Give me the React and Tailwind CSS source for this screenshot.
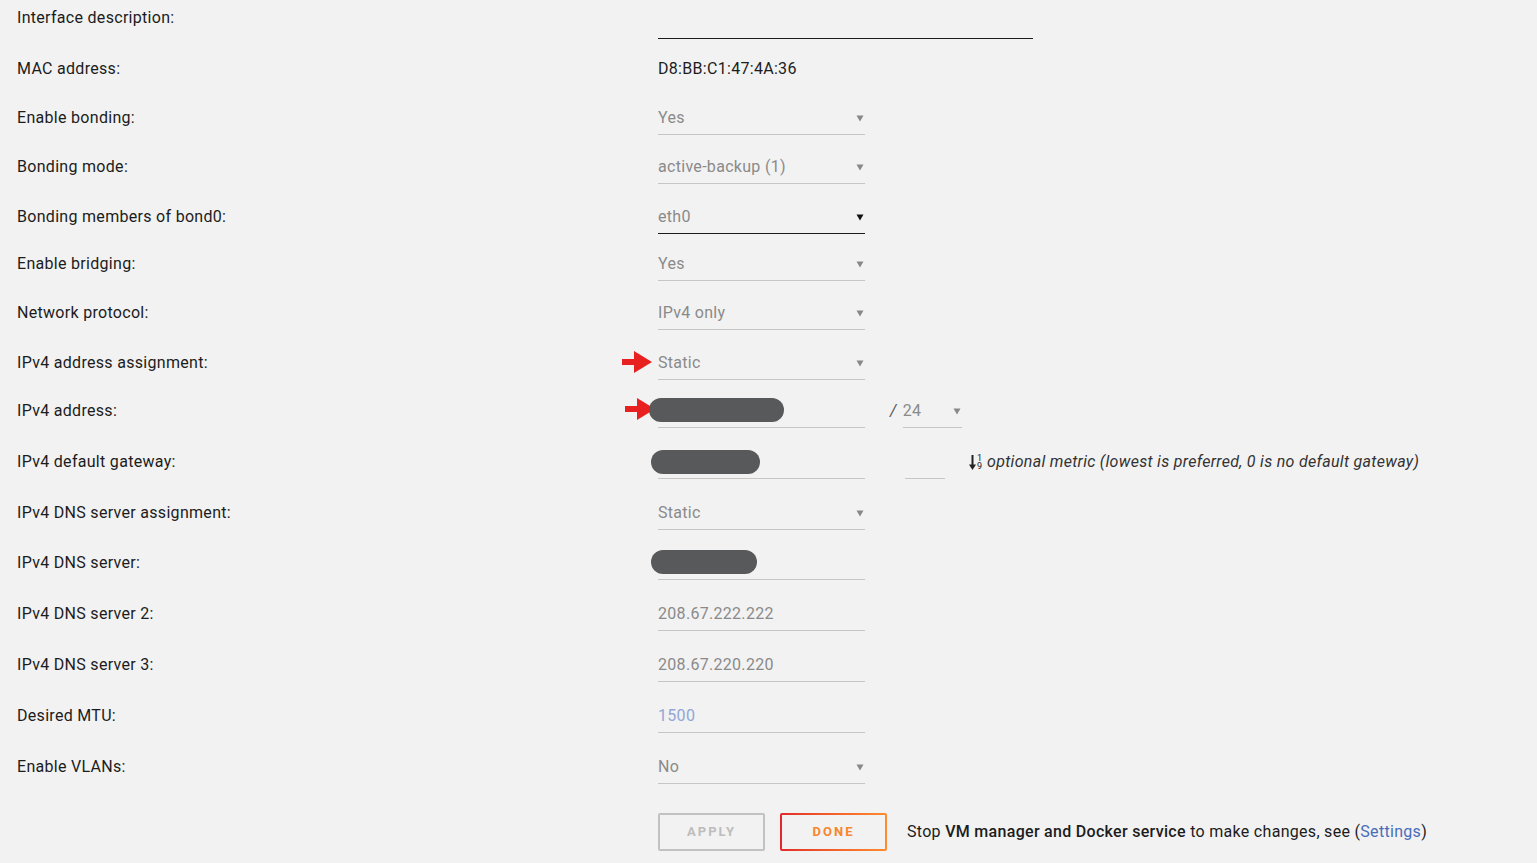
import React from 'react';

const FONT = "font-['Roboto',_'Noto_Sans',_sans-serif]";

function Caret({ dark }) {
    return (
        <svg width="8" height="8" viewBox="0 0 8 8" className="shrink-0">
            <path d="M0.5 1.5 H7.5 L4 7.5 Z" fill={dark ? '#111' : '#888'} />
        </svg>
    );
}

function RedArrow({ className }) {
    return (
        <svg width="30" height="22" viewBox="0 0 30 22" className={className}>
            <rect x="0" y="8" width="14" height="6" fill="#e8201f" />
            <path d="M12 0 L30 11 L12 22 Z" fill="#e8201f" />
        </svg>
    );
}

function Pill({ w }) {
    return <div className="h-[24px] rounded-full bg-[#58595b]" style={{ width: w }} />;
}

function Select({ value, dark, width = 'w-[207px]' }) {
    return (
        <div className={`${width} h-[34px] flex items-center justify-between border-b ${dark ? 'border-[#1c1c1c]' : 'border-[#c6c6c6]'} pr-[1px]`}>
            <span className="text-[#8a8a8a]">{value}</span>
            <Caret dark={dark} />
        </div>
    );
}

function Input({ value, color = 'text-[#8a8a8a]', children }) {
    return (
        <div className="relative w-[207px] h-[34px] flex items-center border-b border-[#c6c6c6]">
            <span className={color}>{value}</span>
            {children}
        </div>
    );
}

function Row({ label, className = '', children }) {
    return (
        <div className={`h-[50px] flex items-center ${className}`}>
            <div className="w-[641px] shrink-0 text-[#1c1c1c]">{label}</div>
            <div className="flex items-center relative">{children}</div>
        </div>
    );
}

export default function App() {
    return (
        <div className={`min-h-[863px] bg-[#f2f2f2] ${FONT} text-[16px] tracking-[0.3px] overflow-hidden`}>
            <div className="pl-[17px] -mt-[7px]">
                <Row label="Interface description:">
                    <div className="w-[375px] h-[38px] border-b border-[#1c1c1c] translate-y-[2px]" />
                </Row>
                <Row label="MAC address:" className="mt-[1px]">
                    <span className="text-[#1c1c1c]">D8:BB:C1:47:4A:36</span>
                </Row>
                <Row label="Enable bonding:" className="-mt-[1px]">
                    <Select value="Yes" />
                </Row>
                <Row label="Bonding mode:" className="-mt-[1px]">
                    <Select value="active-backup (1)" />
                </Row>
                <Row label="Bonding members of bond0:">
                    <Select value="eth0" dark />
                </Row>
                <Row label="Enable bridging:" className="-mt-[3px]">
                    <Select value="Yes" />
                </Row>
                <Row label="Network protocol:" className="-mt-[1px]">
                    <Select value="IPv4 only" />
                </Row>
                <Row label="IPv4 address assignment:">
                    <RedArrow className="absolute -left-[36px] top-[5px]" />
                    <Select value="Static" />
                </Row>
                <Row label="IPv4 address:" className="-mt-[2px]">
                    <RedArrow className="absolute -left-[33px] top-[4px]" />
                    <Input value="">
                        <div className="absolute -left-[9px] top-[4px]">
                            <Pill w={135} />
                        </div>
                    </Input>
                    <span className="ml-[25px] text-[#555] italic">/</span>
                    <Select value="24" width="w-[59px] ml-[6px]" />
                </Row>
                <Row label="IPv4 default gateway:" className="mt-[1px]">
                    <Input value="">
                        <div className="absolute -left-[7px] top-[5px]">
                            <Pill w={109} />
                        </div>
                    </Input>
                    <div className="ml-[40px] w-[40px] h-[34px] border-b border-[#c6c6c6]" />
                    <div className="ml-[24px] flex items-center text-[#333] italic">
                        <span className="flex items-center mr-[5px] not-italic">
                            <svg width="7" height="16" viewBox="0 0 7 16">
                                <path d="M3.5 1 V12" stroke="#222" strokeWidth="2" />
                                <path d="M0 10.5 H7 L3.5 16 Z" fill="#222" />
                            </svg>
                            <span className="flex flex-col text-[9px] leading-[8px] ml-[1px] text-[#222] tracking-normal">
                                <span>1</span>
                                <span>9</span>
                            </span>
                        </span>
                        optional metric (lowest is preferred, 0 is no default gateway)
                    </div>
                </Row>
                <Row label="IPv4 DNS server assignment:" className="mt-[1px]">
                    <Select value="Static" />
                </Row>
                <Row label="IPv4 DNS server:">
                    <Input value="">
                        <div className="absolute -left-[7px] top-[4px]">
                            <Pill w={106} />
                        </div>
                    </Input>
                </Row>
                <Row label="IPv4 DNS server 2:" className="mt-[1px]">
                    <Input value="208.67.222.222" />
                </Row>
                <Row label="IPv4 DNS server 3:" className="mt-[1px]">
                    <Input value="208.67.220.220" />
                </Row>
                <Row label="Desired MTU:" className="mt-[1px]">
                    <Input value="1500" color="text-[#91a6d6]" />
                </Row>
                <Row label="Enable VLANs:" className="mt-[1px]">
                    <Select value="No" />
                </Row>
                <div className="flex items-center pl-[641px] mt-[21px]">
                    <button className="w-[107px] h-[38px] border-2 border-[#c2c2c2] rounded-[2px] text-[#bdbdbd] text-[13px] font-bold tracking-[2px]">
                        APPLY
                    </button>
                    <div className="ml-[15px] w-[107px] h-[38px] p-[2px] rounded-[2px] bg-gradient-to-r from-[#e22828] to-[#ff8b2f]">
                        <div className="w-full h-full bg-[#f2f2f2] flex items-center justify-center text-[13px] font-bold tracking-[2px] text-[#f7862c]">
                            DONE
                        </div>
                    </div>
                    <span className="ml-[20px] text-[#1c1c1c]">
                        Stop <b className="font-medium">VM manager and Docker service</b> to make changes, see (<span className="text-[#486dba]">Settings</span>)
                    </span>
                </div>
            </div>
        </div>
    );
}
